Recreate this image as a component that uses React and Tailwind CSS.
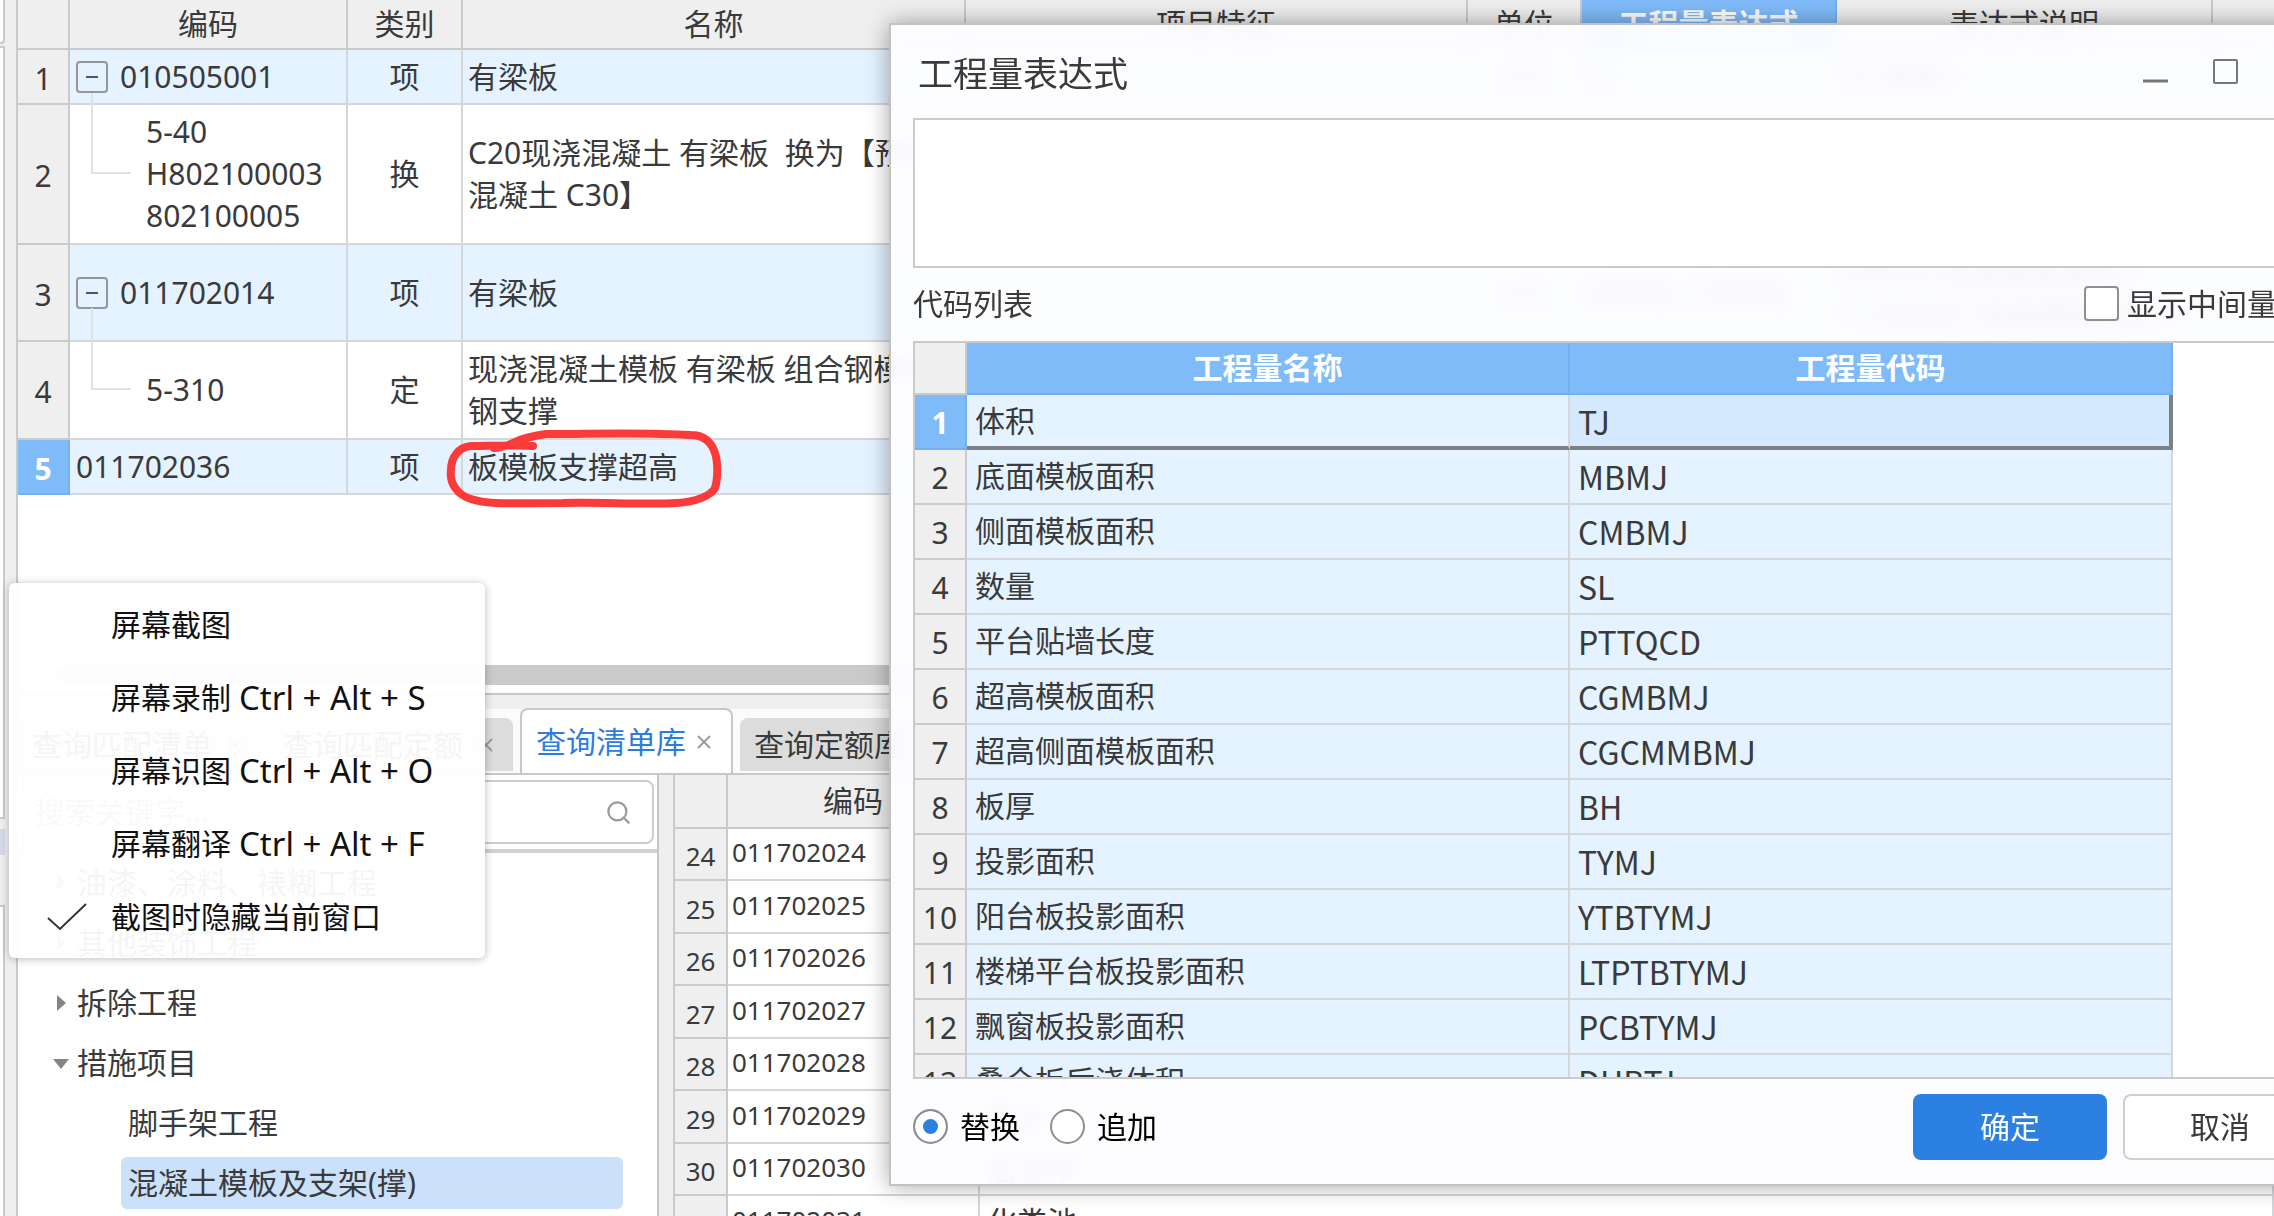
import { useState } from "react";
import clsx from "clsx";
import { X, Search } from "lucide-react";

const billRows = [
  { no: 1, code: "010505001", kind: "项", name: "有梁板", parent: true, unit: "m3", expr: "TJ", desc: "TJ<体积>", height: "h-[55px]" },
  { no: 2, code: "5-40\nH802100003\n802100005", kind: "换", name: "C20现浇混凝土 有梁板  换为【预拌\n混凝土 C30】", child: true, line: "-top-[12px]", height: "h-[140px]" },
  { no: 3, code: "011702014", kind: "项", name: "有梁板", parent: true, unit: "m2", expr: "MBMJ+CMBMJ", desc: "MBMJ<底面模板面积>\n+CMBMJ<侧面模板面积>", height: "h-[97px]" },
  { no: 4, code: "5-310", kind: "定", name: "现浇混凝土模板 有梁板 组合钢模板\n钢支撑", child: true, line: "-top-[34px]", height: "h-[98px]" },
  { no: 5, code: "011702036", kind: "项", name: "板模板支撑超高", active: true, height: "h-[55px]" },
];

const codeRows = [
  ["体积", "TJ"],
  ["底面模板面积", "MBMJ"],
  ["侧面模板面积", "CMBMJ"],
  ["数量", "SL"],
  ["平台贴墙长度", "PTTQCD"],
  ["超高模板面积", "CGMBMJ"],
  ["超高侧面模板面积", "CGCMMBMJ"],
  ["板厚", "BH"],
  ["投影面积", "TYMJ"],
  ["阳台板投影面积", "YTBTYMJ"],
  ["楼梯平台板投影面积", "LTPTBTYMJ"],
  ["飘窗板投影面积", "PCBTYMJ"],
  ["叠合板后浇体积", "DHBTJ"],
];

const libraryRows = [
  [24, "011702024", "楼梯"],
  [25, "011702025", "其他现浇构件"],
  [26, "011702026", "电缆沟、地沟"],
  [27, "011702027", "台阶"],
  [28, "011702028", "扶手"],
  [29, "011702029", "散水"],
  [30, "011702030", "后浇带"],
  [31, "011702031", "化粪池"],
];

const tabs = ["查询匹配清单", "查询匹配定额", "查询清单库", "查询定额库"];

const treeItems = [
  { label: "油漆、涂料、裱糊工程" },
  { label: "其他装饰工程" },
  { label: "拆除工程" },
  { label: "措施项目", open: true },
  { label: "脚手架工程", leaf: true },
  { label: "混凝土模板及支架(撑)", leaf: true, active: true },
];

const menuItems = [
  { label: "屏幕截图" },
  { label: "屏幕录制", keys: "Ctrl + Alt + S" },
  { label: "屏幕识图", keys: "Ctrl + Alt + O" },
  { label: "屏幕翻译", keys: "Ctrl + Alt + F" },
  { label: "截图时隐藏当前窗口", checked: true },
];

const headCell = "border-r-2 border-b-2 border-[#cacaca] bg-[#efefef] p-0 font-normal";
const cell = "relative border-r-2 border-b-2 border-[#d4d6d8] p-0";

function BillTable() {
  return (
    <table className="w-[2395px] table-fixed border-separate border-spacing-0">
      <colgroup>
        <col className="w-[52px]" />
        <col className="w-[278px]" />
        <col className="w-[115px]" />
        <col className="w-[503px]" />
        <col className="w-[502px]" />
        <col className="w-[114px]" />
        <col className="w-[255px]" />
        <col className="w-[376px]" />
        <col className="w-[200px]" />
      </colgroup>
      <thead>
        <tr className="h-[50px]">
          <th className={headCell}></th>
          <th className={headCell}>编码</th>
          <th className={headCell}>类别</th>
          <th className={headCell}>名称</th>
          <th className={headCell}>项目特征</th>
          <th className={headCell}>单位</th>
          <th className="border-r-2 border-b-2 border-[#74b0f0] bg-[#80bbf9] p-0 font-bold text-white">工程量表达式</th>
          <th className={headCell}>表达式说明</th>
          <th className={headCell}></th>
        </tr>
      </thead>
      <tbody>
        {billRows.map((row) => (
          <tr key={row.no} className={clsx(row.height, row.child ? "bg-white" : "bg-[#e4f3ff]")}>
            <td
              className={clsx(
                "border-r-2 border-b-2 p-0 pt-1 text-center",
                row.active ? "border-[#74b0f0] bg-[#80bbf9] font-bold text-white" : "border-[#cacaca] bg-[#efefef]"
              )}
            >
              {row.no}
            </td>
            <td className={cell}>
              {row.child && (
                <span className={clsx("absolute bottom-1/2 left-[21px] w-10 border-b-2 border-l-2 border-[#dfe3e6]", row.line)}></span>
              )}
              <div className={clsx("flex items-center", row.child ? "pl-[76px]" : "pl-[6px]")}>
                {row.parent && (
                  <button aria-label="折叠" className="mr-3 flex size-8 items-center justify-center rounded border-2 border-[#949698]">
                    <span className="h-[2px] w-3 bg-[#555]"></span>
                  </button>
                )}
                <span className="whitespace-pre">{row.code}</span>
              </div>
            </td>
            <td className={clsx(cell, "text-center")}>{row.kind}</td>
            <td className={clsx(cell, "overflow-hidden pl-[5px] whitespace-pre")}>{row.name}</td>
            <td className={cell}></td>
            <td className={clsx(cell, "text-center")}>{row.unit}</td>
            <td className={clsx(cell, "pl-[5px]")}>{row.expr}</td>
            <td className={clsx(cell, "overflow-hidden pl-[5px] whitespace-pre")}>{row.desc}</td>
            <td className={cell}></td>
          </tr>
        ))}
      </tbody>
    </table>
  );
}

function TabBar() {
  return (
    <div className="flex h-[66px] items-end gap-[7px] border-b-2 border-[#c6c7ca] bg-[#fbfbfb]">
      {tabs.map((tab) => {
        const active = tab === "查询清单库";
        return (
          <div
            key={tab}
            className={clsx(
              "flex shrink-0 items-center justify-between rounded-t-lg pr-4 pl-[14px]",
              active
                ? "h-[65px] w-[213px] border-2 border-b-0 border-[#c6c7ca] bg-white text-[#2b7de0]"
                : "mb-[2px] h-[53px] w-[244px] bg-[#dcdcdc]"
            )}
          >
            <button className="whitespace-nowrap">{tab}</button>
            <button aria-label="关闭标签">
              <X size={22} strokeWidth={2} className="text-[#999]" />
            </button>
          </div>
        );
      })}
    </div>
  );
}

function CategoryTree() {
  return (
    <aside className="flex w-[641px] shrink-0 flex-col border-r-2 border-[#c6c7ca] bg-white">
      <div className="border-b-4 border-[#d0d1d3] px-[3px] py-[5px]">
        <div className="flex h-[64px] items-center rounded-lg border-2 border-[#cdcdcd] bg-white pr-5 pl-3">
          <input aria-label="搜索" placeholder="搜索关键字..." className="min-w-0 flex-1 outline-none placeholder:text-[#888]" />
          <Search size={27} strokeWidth={2} className="text-[#999]" />
        </div>
      </div>
      <ul>
        {treeItems.map((item) => (
          <li key={item.label} className={clsx("flex h-[60px] items-center", item.leaf ? "pl-[103px]" : "pl-[35px]")}>
            {!item.leaf && (
              <svg viewBox="0 0 16 16" className="mr-2 size-4 fill-[#858585]">
                <path d={item.open ? "M0 4h16L8 14z" : "M4 0l9 8-9 8z"} />
              </svg>
            )}
            <button
              className={clsx(
                "h-[52px] text-left whitespace-nowrap",
                item.leaf && "w-[502px] rounded-md pl-[7px]",
                item.active && "bg-[#cbe0f9]"
              )}
            >
              {item.label}
            </button>
          </li>
        ))}
      </ul>
    </aside>
  );
}

function LibraryTable() {
  return (
    <table className="w-full table-fixed border-separate border-spacing-0 border-l-2 border-[#cacaca] bg-white">
      <colgroup>
        <col className="w-[53px]" />
        <col className="w-[252px]" />
        <col />
      </colgroup>
      <thead>
        <tr className="h-[54px]">
          <th className={headCell}></th>
          <th className={headCell}>编码</th>
          <th className={headCell}></th>
        </tr>
      </thead>
      <tbody>
        {libraryRows.map(([no, code, name]) => (
          <tr key={no} className="h-[52px] even:h-[53px]">
            <td className="border-r-2 border-b-2 border-[#cacaca] bg-[#efefef] p-0 pt-1 text-center text-[26px] leading-10">{no}</td>
            <td className={clsx(cell, "pb-1 pl-1 text-[26px] leading-10")}>{code}</td>
            <td className={clsx(cell, "pl-[7px]")}>{name}</td>
          </tr>
        ))}
      </tbody>
    </table>
  );
}

function ExpressionDialog() {
  const [mode, setMode] = useState("replace");
  const radio =
    "size-[35px] appearance-none rounded-full border-2 border-[#8f8f8f] bg-white checked:bg-[#2b80e2] checked:shadow-[inset_0_0_0_8px_white]";

  return (
    <section
      role="dialog"
      aria-label="工程量表达式"
      className="absolute top-[23px] -right-[67px] bottom-[30px] left-[889px] flex flex-col border-2 border-[#c2c2c2] bg-[#fdfdff]/95 px-[22px] shadow-[0_0_22px_rgba(0,0,0,0.35)] backdrop-blur-sm"
    >
      <header className="flex h-[93px] shrink-0 items-center justify-between pt-1 pr-[9px] pl-[5px]">
        <h2 className="text-[35px]">工程量表达式</h2>
        <div className="flex gap-[45px] pb-1">
          <button aria-label="最小化">
            <svg viewBox="0 0 25 25" className="size-[25px] stroke-[#777]" strokeWidth="3">
              <path d="M0 22h25" />
            </svg>
          </button>
          <button aria-label="最大化">
            <svg viewBox="0 0 25 25" className="size-[25px] fill-none stroke-[#777]" strokeWidth="2">
              <rect x="1" y="1" width="23" height="23" rx="1" />
            </svg>
          </button>
          <button aria-label="关闭">
            <X size={25} className="text-[#777]" />
          </button>
        </div>
      </header>

      <textarea aria-label="表达式" className="h-[150px] shrink-0 resize-none border-2 border-[#cbcbcb] bg-white p-2 outline-none" />

      <div className="flex h-[73px] shrink-0 items-center justify-between pr-10 pb-[2px]">
        <span>代码列表</span>
        <label className="flex items-center gap-2">
          <input type="checkbox" className="size-[35px] appearance-none rounded border-2 border-[#8f8f8f] bg-white" />
          显示中间量
        </label>
      </div>

      <div className="min-h-0 flex-1 overflow-hidden border-y-2 border-l-2 border-[#cacaca] bg-white">
        <table className="w-[1258px] table-fixed border-separate border-spacing-0">
          <colgroup>
            <col className="w-[52px]" />
            <col className="w-[603px]" />
            <col className="w-[603px]" />
          </colgroup>
          <thead>
            <tr className="h-[52px] text-white">
              <th className={headCell}></th>
              <th className="border-r-2 border-b-2 border-[#74b0f0] bg-[#80bbf9] p-0">工程量名称</th>
              <th className="border-r-2 border-b-2 border-[#74b0f0] bg-[#80bbf9] p-0">工程量代码</th>
            </tr>
          </thead>
          <tbody>
            {codeRows.map(([name, code], i) => (
              <tr key={code} className="h-[55px] bg-[#e4f3ff]">
                <td
                  className={clsx(
                    "border-r-2 border-b-2 p-0 pt-[2px] text-center",
                    i === 0 ? "border-[#74b0f0] bg-[#80bbf9] font-bold text-white" : "border-[#cacaca] bg-[#efefef]"
                  )}
                >
                  {i + 1}
                </td>
                <td
                  className={clsx(
                    "border-r-2 p-0 pl-2",
                    i === 0 ? "border-b-4 border-r-[#d4d6d8] border-b-[#7e8183]" : "border-b-2 border-[#d4d6d8] pb-[2px]"
                  )}
                >
                  {name}
                </td>
                <td
                  className={clsx(
                    "p-0 pl-2 font-['Noto_Sans_CJK_SC',sans-serif] text-[32px]",
                    i === 0 ? "border-r-4 border-b-4 border-[#7e8183] bg-[#d4e9fe]" : "border-r-2 border-b-2 border-[#d4d6d8] pb-[2px]"
                  )}
                >
                  {code}
                </td>
              </tr>
            ))}
          </tbody>
        </table>
      </div>

      <footer className="flex h-[105px] shrink-0 items-center pb-[10px]">
        <div className="flex flex-1 gap-[30px] text-black">
          <label className="flex items-center gap-3">
            <input type="radio" name="mode" className={radio} checked={mode === "replace"} onChange={() => setMode("replace")} />
            替换
          </label>
          <label className="flex items-center gap-3">
            <input type="radio" name="mode" className={radio} checked={mode === "append"} onChange={() => setMode("append")} />
            追加
          </label>
        </div>
        <button className="mr-4 h-[66px] w-[194px] rounded-lg bg-[#2b80e2] text-white">确定</button>
        <button className="h-[66px] w-[194px] rounded-lg border-2 border-[#cfcfcf] bg-white">取消</button>
      </footer>
    </section>
  );
}

function ScreenshotMenu() {
  return (
    <div
      role="menu"
      className="absolute top-[583px] left-[9px] flex w-[476px] flex-col rounded-md bg-white/95 py-[5px] text-[#111] shadow-[0_1px_8px_rgba(0,0,0,0.28)]"
    >
      {menuItems.map((item) => (
        <button
          key={item.label}
          role={item.checked ? "menuitemcheckbox" : "menuitem"}
          aria-checked={item.checked}
          className="flex h-[73px] items-center whitespace-nowrap"
        >
          <span className="w-[102px] shrink-0 pl-[38px]">
            {item.checked && (
              <svg viewBox="0 0 40 28" className="h-7 w-10 fill-none stroke-[#333]" strokeWidth="2">
                <path d="M1 15l12 11L39 1" />
              </svg>
            )}
          </span>
          {item.label}
          {item.keys && <kbd className="ml-2 font-['Noto_Sans',sans-serif] text-[33px]">{item.keys}</kbd>}
        </button>
      ))}
    </div>
  );
}

export default function App() {
  return (
    <div className="relative flex h-screen overflow-hidden bg-[#efefef] font-['Noto_Sans','Noto_Sans_CJK_SC',sans-serif] text-[30px] leading-[42px] text-[#3a3a3a]">
      {/* Edge of the neighbouring panel */}
      <div className="flex w-[5px] shrink-0 flex-col">
        <div className="h-[44px] rounded-br border-r-2 border-b-2 border-[#cacaca] bg-white"></div>
        <div className="mt-[2px] h-[773px] border-2 border-l-0 border-[#cacaca] bg-white"></div>
        <div className="mt-[10px] h-[26px] bg-[#d3dae5]"></div>
        <div className="mt-[50px] flex-1 border-t-2 border-r-2 border-[#cacaca] bg-white"></div>
      </div>

      <main className="ml-[11px] flex min-w-0 flex-1 flex-col border-l-2 border-[#cacaca]">
        <div className="flex min-h-0 flex-[693] flex-col overflow-hidden border-b-2 border-[#c6c7ca] bg-white">
          <BillTable />
          <div className="mt-auto mb-2 ml-[38px] h-5 shrink-0 rounded-l-full bg-[#cacaca]"></div>
        </div>
        <div className="flex min-h-0 flex-[507] flex-col overflow-hidden pt-[14px]">
          <TabBar />
          <div className="flex min-h-0 flex-1">
            <CategoryTree />
            <div className="ml-[14px] min-w-0 flex-1">
              <LibraryTable />
            </div>
          </div>
        </div>
      </main>

      {/* Hand-drawn marker around the name in row 5 */}
      <svg viewBox="0 0 280 80" className="pointer-events-none absolute top-[428px] left-[443px] h-20 w-[280px] fill-none stroke-[#fb3a3a]" strokeWidth="8" strokeLinecap="round" strokeLinejoin="round">
        <path d="M90 18C70 17 45 18 28 18C15 19 8 30 8 42C6 56 15 67 28 71C45 77 70 75 120 75C160 74 200 77 234 75C252 74 268 68 272 60C275 50 275 34 272 25C268 13 260 7 248 7C200 4 150 6 103 6C90 8 80 10 72 14C66 17 58 20 51 20" />
      </svg>

      <ExpressionDialog />
      <ScreenshotMenu />
    </div>
  );
}
